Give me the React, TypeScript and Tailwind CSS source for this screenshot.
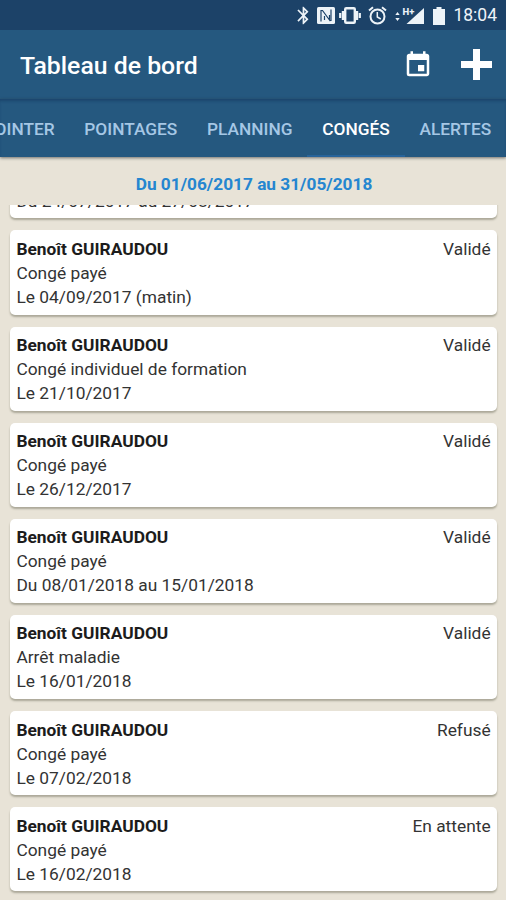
import { MdBluetooth, MdEvent } from 'react-icons/md'

type Leave = { name: string; type: string; date: string; status: string }

const tabs = ['POINTER', 'POINTAGES', 'PLANNING', 'CONGÉS', 'ALERTES']

const leaves: Leave[] = [
  { name: 'Benoît GUIRAUDOU', type: 'Congé payé', date: 'Du 24/07/2017 au 27/08/2017', status: 'Validé' },
  { name: 'Benoît GUIRAUDOU', type: 'Congé payé', date: 'Le 04/09/2017 (matin)', status: 'Validé' },
  { name: 'Benoît GUIRAUDOU', type: 'Congé individuel de formation', date: 'Le 21/10/2017', status: 'Validé' },
  { name: 'Benoît GUIRAUDOU', type: 'Congé payé', date: 'Le 26/12/2017', status: 'Validé' },
  { name: 'Benoît GUIRAUDOU', type: 'Congé payé', date: 'Du 08/01/2018 au 15/01/2018', status: 'Validé' },
  { name: 'Benoît GUIRAUDOU', type: 'Arrêt maladie', date: 'Le 16/01/2018', status: 'Validé' },
  { name: 'Benoît GUIRAUDOU', type: 'Congé payé', date: 'Le 07/02/2018', status: 'Refusé' },
  { name: 'Benoît GUIRAUDOU', type: 'Congé payé', date: 'Le 16/02/2018', status: 'En attente' },
]

function StatusBar() {
  return (
    <div className="flex h-[30px] shrink-0 items-center justify-end bg-[#1c4268] pt-px pr-[9px] text-[#edf3f8]">
      <MdBluetooth className="mr-[3px] size-[21px]" />
      {/* NFC */}
      <svg className="mr-[4px] h-[17px] w-[18px]" viewBox="0 0 18 17">
        <rect width="18" height="17" rx="1.5" fill="currentColor" />
        <path d="M4 14.500V3.500h1.500l7 9.500V8M14 2.500v11h-1M7.500 9v4" fill="none" stroke="#1c4268" strokeWidth="1.200" />
      </svg>
      {/* vibrate */}
      <svg className="mr-[7px] h-[17px] w-[22px]" viewBox="0 0 22 17" fill="none" stroke="currentColor">
        <rect x="6.200" y="1.200" width="9.600" height="14.600" rx="1" strokeWidth="2.400" />
        <path d="M3.900 4v9M18.100 4v9" strokeWidth="2.200" />
        <path d="M1.200 6v5M20.800 6v5" strokeWidth="2.200" />
      </svg>
      {/* alarm */}
      <svg className="mr-[8px] h-[19px] w-[19px]" viewBox="0 0 19 19" fill="none" stroke="currentColor">
        <circle cx="9.500" cy="10.500" r="7" strokeWidth="2" />
        <path d="M1 4.500L5 1.200M18 4.500L14 1.200" strokeWidth="2" />
        <path d="M9.300 6v5l3.500 2" strokeWidth="1.500" />
      </svg>
      {/* mobile signal */}
      <svg className="mr-[9px] h-[18px] w-[29px]" viewBox="0 0 29 18" fill="currentColor">
        <path d="M.3 8l2.200-3 2.200 3zM.3 11l2.200 3 2.200-3zM29 1v16H11.500z" />
        <text x="7.500" y="8" fontSize="9.500" fontWeight="800" fontFamily="Roboto, sans-serif">H+</text>
      </svg>
      {/* battery */}
      <svg className="mr-[8px] h-[18px] w-[12px]" viewBox="0 0 12 18" fill="currentColor">
        <path d="M3.500 0h5v2H12v16H0V2h3.500z" />
      </svg>
      <span className="text-[17.500px] leading-none">18:04</span>
    </div>
  )
}

function LeaveCard({ leave }: { leave: Leave }) {
  return (
    <div className="flex h-[84.100px] shrink-0 justify-between rounded-[5px] bg-white px-[6.400px] pt-[6.600px] text-[17.350px] leading-[24px] text-[#333] shadow-[0_2px_2px_rgba(80,80,60,0.4)]">
      <div>
        <div className="font-bold text-[#1c1c1c]">{leave.name}</div>
        <div>{leave.type}</div>
        <div>{leave.date}</div>
      </div>
      <div>{leave.status}</div>
    </div>
  )
}

export default function App() {
  return (
    <div className="flex h-[900px] w-[506px] flex-col overflow-hidden bg-[#e8e3d7] font-['Roboto',sans-serif]">
      <StatusBar />

      {/* Toolbar */}
      <header className="flex h-[69px] shrink-0 items-center bg-[#25587f] pr-[14px] pl-[20px] text-white">
        <h1 className="grow pt-[2px] text-[24.800px] font-medium">Tableau de bord</h1>
        <MdEvent className="mr-[28px] size-[30px]" />
        <svg className="size-[31px]" viewBox="0 0 31 31" fill="currentColor">
          <path d="M12 0h7v12h12v7H19v12h-7V19H0v-7h12z" />
        </svg>
      </header>

      {/* Tabs */}
      <nav className="z-10 flex h-[58px] shrink-0 justify-end bg-[#25587f] shadow-[inset_0_3px_3px_-1px_#1b456d,0_1px_3px_rgba(50,50,50,0.65)]">
        {tabs.map((tab) => (
          <div
            key={tab}
            className={
              tab === 'CONGÉS'
                ? 'flex items-center border-b-2 border-[#28649a] px-[14.900px] pt-[5px] text-[17.300px] font-medium text-white'
                : 'flex items-center border-b-2 border-transparent px-[14.900px] pt-[5px] text-[17.300px] font-medium text-[#a5c7e5]'
            }
          >
            {tab}
          </div>
        ))}
      </nav>

      <div className="flex h-[48px] shrink-0 items-center justify-center pt-[7px] pl-[2px] text-[17.250px] font-bold text-[#2586d0]">
        Du 01/06/2017 au 31/05/2018
      </div>

      {/* Leave list, scrolled past its first card */}
      <main className="flex min-h-0 grow flex-col justify-end gap-[12px] overflow-hidden pr-[9px] pb-[8.900px] pl-[10px]">
        {leaves.map((leave) => (
          <LeaveCard key={leave.date} leave={leave} />
        ))}
      </main>
    </div>
  )
}
